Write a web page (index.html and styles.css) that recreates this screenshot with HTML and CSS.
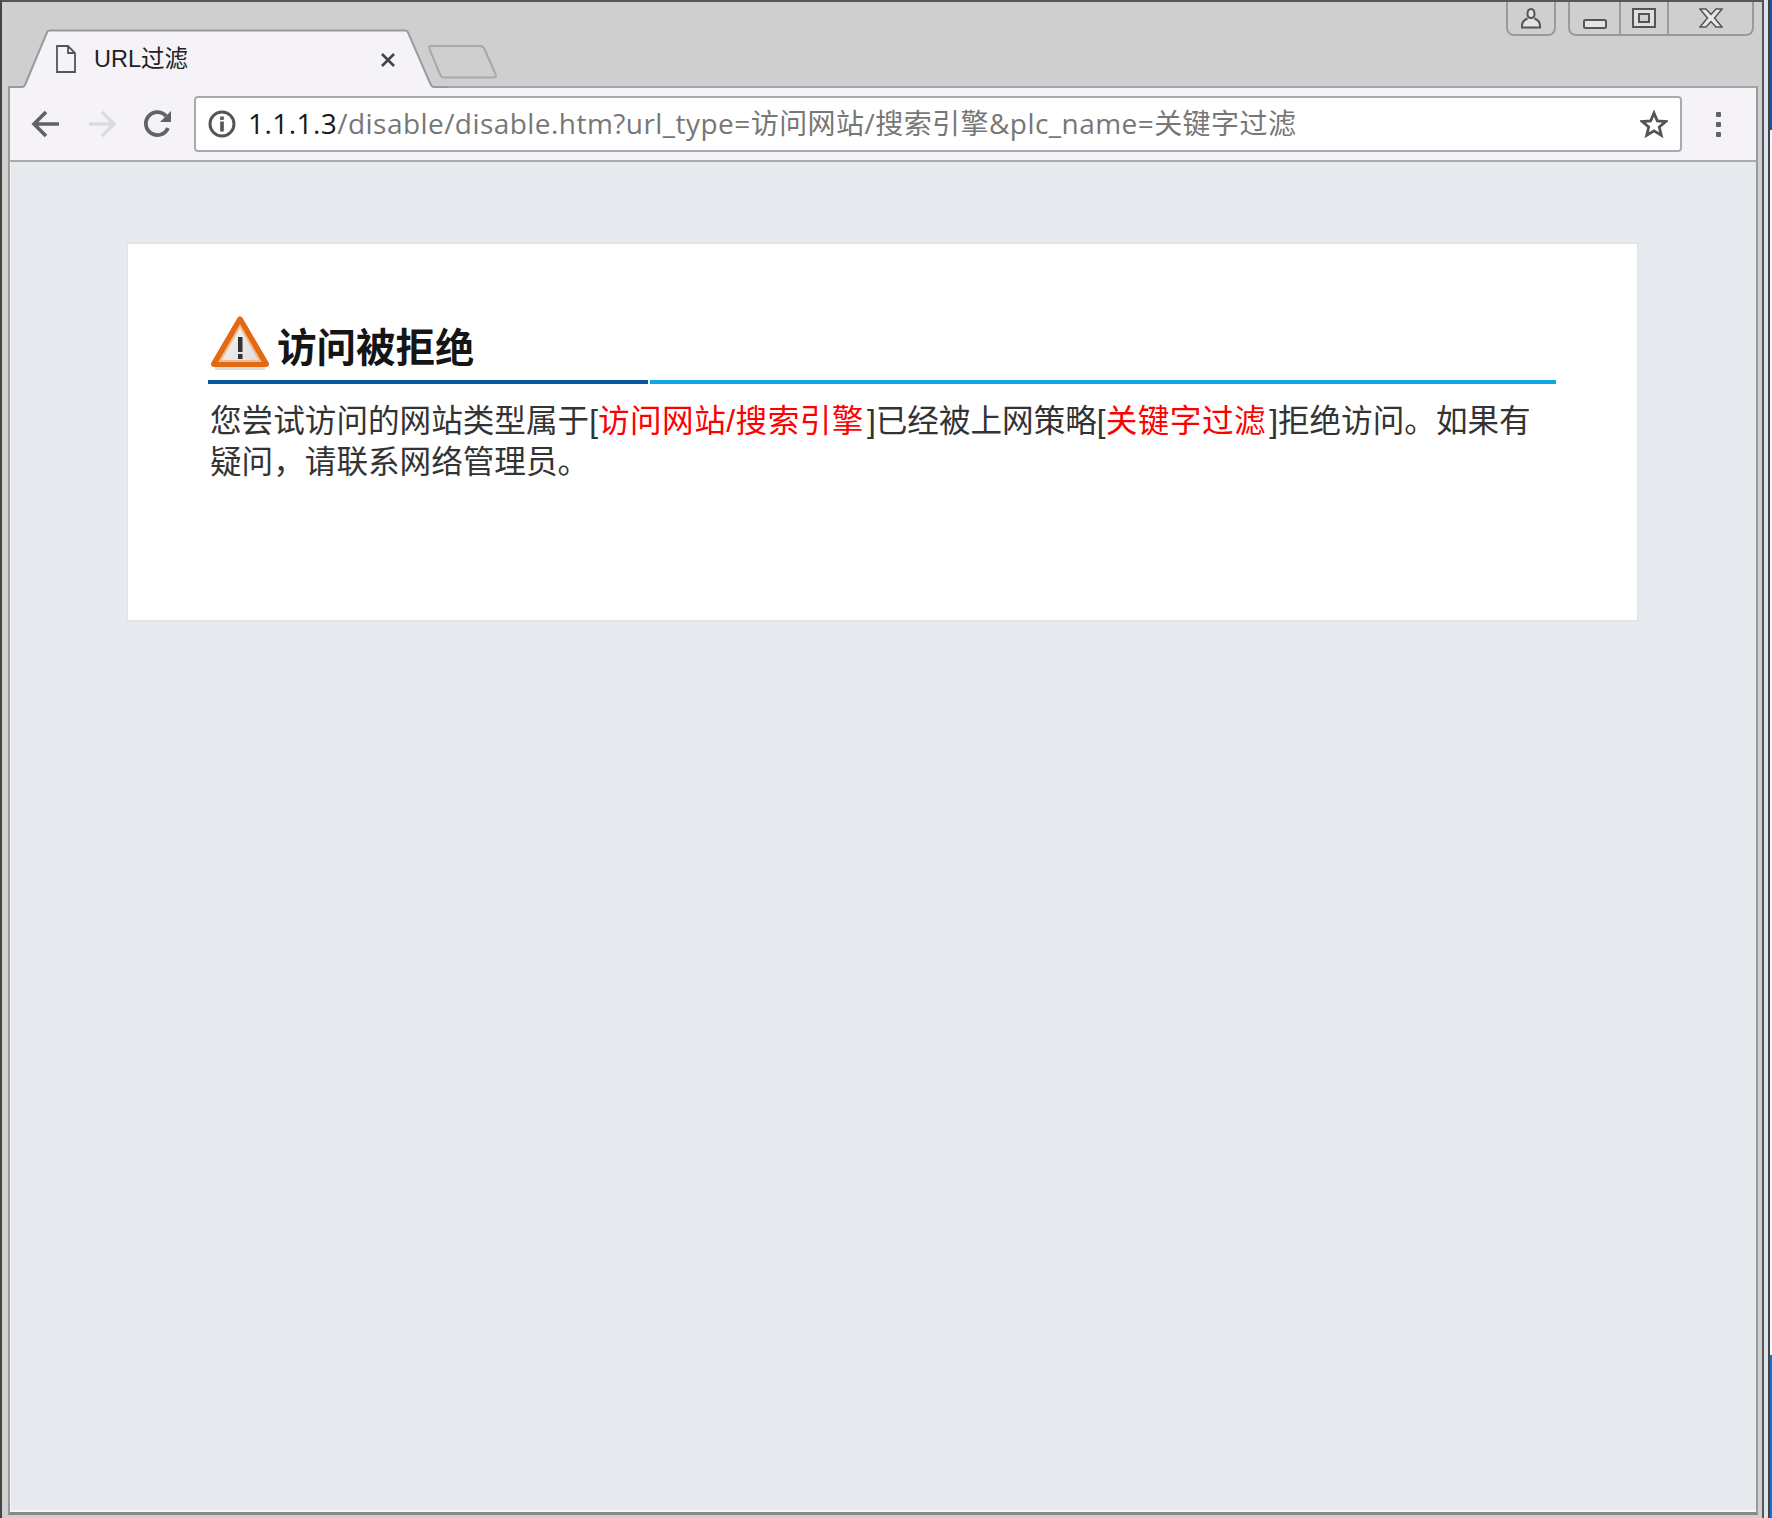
FILE: index.html
```html
<!DOCTYPE html>
<html lang="zh-CN">
<head>
<meta charset="utf-8">
<title>URL过滤</title>
<link rel="stylesheet" href="styles.css">
</head>
<body>
<div class="screen">
  <div class="window">
    <header class="titlebar">
      <div class="tab">
        <svg class="tab-shape" width="440" height="60" viewBox="0 0 440 60"><path d="M14 60V58C16 58 16.500 57 17 56L39 3.500C39.500 2 40.500 1.500 42 1.500H397C398.500 1.500 399.500 2 400 3.500L422 54C423 57 424 58 426 58V60Z" fill="#f6f3f8"/><path d="M0 58H14C16 58 16.500 57 17 56L39 3.500C39.500 2 40.500 1.500 42 1.500H397C398.500 1.500 399.500 2 400 3.500L422 54C423 57 424 58 426 58H440" fill="none" stroke="#9a9a9a" stroke-width="2"/></svg>
        <svg class="page-icon" width="20" height="28" viewBox="0 0 20 28"><path d="M1 1H12L19 8V27H1ZM12 1V8H19" fill="#f6f3f8" stroke="#555" stroke-width="1.800"/></svg>
        <span class="tab-title">URL过滤</span>
        <svg class="tab-close" width="16" height="16" viewBox="0 0 16 16"><path d="M2 2L14 14M14 2L2 14" stroke="#444" stroke-width="2.600"/></svg>
      </div>
      <svg class="newtab" width="70" height="36" viewBox="0 0 70 36"><path d="M2.500 2H52C54 2 55 2.500 56 4L67.500 30C68.500 32.500 67.500 33.500 65 33.500H16C14.500 33.500 13.500 33 12.500 31.500L1.500 5C1 3 1 2 2.500 2Z" fill="#cfcfcf" stroke="#a9a9a9" stroke-width="2"/></svg>
      <div class="controls">
        <div class="ctrl-group profile">
          <svg width="22" height="22" viewBox="0 0 22 22"><path d="M7.500 7C7.500 4 9 2 11 2S14.500 4 14.500 7 13 11 11 11 7.500 10 7.500 7ZM7.500 11.500C4 13 2 14.500 2 18.500V20.500H20V18.500C20 14.500 18 13 14.500 11.500" fill="#e4e4e4" stroke="#555" stroke-width="2"/></svg>
        </div>
        <div class="ctrl-group sys">
          <div class="sys-btn min"><svg width="24" height="10" viewBox="0 0 24 10"><rect x="1" y="1" width="22" height="8" rx="1.500" fill="#e4e4e4" stroke="#555" stroke-width="2"/></svg></div>
          <div class="sys-btn max"><svg width="24" height="20" viewBox="0 0 24 20"><rect x="1" y="1" width="22" height="18" fill="#e0e0e0" stroke="#555" stroke-width="2"/><rect x="7" y="6" width="10" height="8" fill="#cfcfcf" stroke="#555" stroke-width="2"/></svg></div>
          <div class="sys-btn close"><svg width="24" height="20" viewBox="0 0 24 20"><path d="M1 1H7L12 6.500L17 1H23L15.500 10L23 19H17L12 13.500L7 19H1L8.500 10Z" fill="#e8e8e8" stroke="#555" stroke-width="1.500"/></svg></div>
        </div>
      </div>
    </header>
    <nav class="toolbar">
      <button class="nav-btn" aria-label="back"><svg width="30" height="28" viewBox="0 0 30 28"><path d="M28 14H4M15 2L3 14L15 26" fill="none" stroke="#5f6368" stroke-width="3.600"/></svg></button>
      <button class="nav-btn" aria-label="forward"><svg width="30" height="28" viewBox="0 0 30 28"><path d="M2 14H26M15 2L27 14L15 26" fill="none" stroke="#dadce0" stroke-width="3.600"/></svg></button>
      <button class="nav-btn" aria-label="reload"><svg width="30" height="30" viewBox="0 0 30 30"><path d="M25 19A11.500 11.500 0 1 1 23 7" fill="none" stroke="#5f6368" stroke-width="3.800"/><path d="M28 2V13H17Z" fill="#5f6368"/></svg></button>
      <div class="omnibox">
        <svg class="info" width="28" height="28" viewBox="0 0 28 28"><circle cx="14" cy="14" r="12" fill="#fff" stroke="#555" stroke-width="3"/><rect x="12.200" y="6.500" width="3.600" height="3.400" fill="#555"/><rect x="12.200" y="11.500" width="3.600" height="10" fill="#555"/></svg>
        <div class="url"><span class="host">1.1.1.3</span>/disable/disable.htm?url_type=访问网站/搜索引擎&amp;plc_name=关键字过滤</div>
        <svg class="star" width="28" height="28" viewBox="0 0 28 28"><path d="M14 3L17.300 10.800L25.800 11.500L19.300 17L21.300 25.300L14 20.900L6.700 25.300L8.700 17L2.200 11.500L10.700 10.800Z" fill="#fff" stroke="#555" stroke-width="2.800"/></svg>
      </div>
      <div class="menu"><i></i><i></i><i></i></div>
    </nav>
    <main class="content">
      <section class="card">
        <h1 class="heading">
          <svg class="warn" width="60" height="58" viewBox="0 0 60 58">
            <defs><linearGradient id="warnfill" x1="0" y1="0" x2="1" y2="1"><stop offset="0" stop-color="#fafafa"/><stop offset="1" stop-color="#dcdcdc"/></linearGradient></defs>
            <path d="M5 52.500H55" stroke="#dddddd" stroke-width="3"/>
            <path d="M30 3.500L56 48H4Z" fill="url(#warnfill)" stroke="#e26a14" stroke-width="6" stroke-linejoin="round"/>
            <path d="M30 10L50 45H10Z" fill="none" stroke="#f2b98a" stroke-width="2"/>
            <rect x="28" y="21" width="4.500" height="15" fill="#333"/>
            <rect x="28" y="38" width="4.500" height="5" fill="#333"/>
          </svg>
          <span>访问被拒绝</span>
        </h1>
        <div class="rule"><i class="rule-dark"></i><i class="rule-light"></i></div>
        <p class="message">您尝试访问的网站类型属于[<em>访问网站/搜索引擎</em>]已经被上网策略[<em>关键字过滤</em>]拒绝访问。如果有疑问，请联系网络管理员。</p>
      </section>
    </main>
  </div>
  <div class="edge"></div>
</div>
</body>
</html>
```
FILE: styles.css
```css
* { box-sizing: border-box; }
html, body { margin: 0; padding: 0; }
body {
  width: 1772px;
  height: 1518px;
  overflow: hidden;
  background: #cfcfcf;
  font-family: "Liberation Sans", "Noto Sans CJK SC", sans-serif;
}
.screen { display: flex; width: 1772px; height: 1518px; }
.window {
  width: 1764px;
  height: 1518px;
  flex: none;
  display: flex;
  flex-direction: column;
  background: #cfcfcf;
  border-top: 2px solid #555;
  border-left: 2px solid #444;
  border-right: 2px solid #555;
  padding: 0 4px 3px 6px;
}
.edge {
  width: 8px;
  flex: none;
  background:
    linear-gradient(90deg, #dce4ec 0 4px, #444 4px 6px, transparent 6px),
    linear-gradient(180deg, #0f5aa5 0 130px, #f4f6f9 130px 1355px, #1272cc 1355px);
}
.titlebar {
  height: 84px;
  position: relative;
  z-index: 1;
  display: flex;
  flex: none;
  margin: 0 -4px 0 0;
}
.tab {
  width: 432px;
  height: 58px;
  margin-top: 27px;
  display: flex;
  align-items: center;
  position: relative;
  padding: 0 0 0 48px;
  flex: none;
}
.tab-shape { position: absolute; left: 0; top: 0; }
.page-icon, .tab-title, .tab-close { position: relative; }
.page-icon { flex: none; margin-top: 2px; }
.tab-title {
  margin-left: 18px;
  width: 286px;
  padding-bottom: 2px;
  font-size: 23.500px;
  color: #222;
}
.tab-close { flex: none; margin-top: 4px; }
.newtab { margin: 42px 0 0 -12px; flex: none; }
.controls {
  position: absolute;
  top: 0;
  right: 8px;
  display: flex;
  gap: 12px;
}
.ctrl-group {
  height: 34px;
  border: 2px solid #9a9a9a;
  border-top: 0;
  border-radius: 0 0 8px 8px;
  display: flex;
}
.profile { width: 50px; align-items: center; justify-content: center; }
.sys { width: 186px; }
.sys-btn { display: flex; align-items: center; justify-content: center; }
.min { width: 49px; padding-top: 12px; }
.max { width: 50px; border-left: 2px solid #9a9a9a; border-right: 2px solid #9a9a9a; }
.close { flex: 1; }
.toolbar {
  height: 76px;
  flex: none;
  background: #f6f3f8;
  border-top: 2px solid #a6a6a6;
  border-bottom: 2px solid #aaa;
  border-left: 2px solid #999;
  border-right: 2px solid #999;
  display: flex;
  align-items: center;
  padding: 0 0 0 8px;
}
.nav-btn {
  width: 56px;
  height: 40px;
  padding: 0;
  border: 0;
  background: none;
  display: flex;
  align-items: center;
  justify-content: center;
}
.omnibox {
  width: 1488px;
  height: 56px;
  margin-left: 8px;
  background: #fff;
  border: 2px solid #aaa;
  border-radius: 4px;
  display: flex;
  align-items: center;
  padding: 0 12px 0 12px;
}
.info { flex: none; }
.url {
  flex: 1;
  margin-left: 12px;
  padding-bottom: 3px;
  font-family: "Open Sans", "Noto Sans CJK SC", sans-serif;
  font-size: 28px;
  line-height: 40px;
  letter-spacing: 0.450px;
  color: #777;
  white-space: nowrap;
}
.host { color: #1a1a1a; }
.star { flex: none; }
.menu {
  margin-left: 34px;
  display: flex;
  flex-direction: column;
  gap: 5px;
}
.menu i { display: block; width: 5px; height: 5px; background: #5f6368; border-radius: 1px; }
.content {
  flex: 1;
  background: #e6e9ee;
  padding: 81px 118px 0 117px;
  border-left: 2px solid #999;
  border-right: 2px solid #999;
  border-bottom: 3px solid #888;
  box-shadow: inset 0 -2px 0 #f6f6f8, inset 1px 0 0 #f6f6f8;
}
.card {
  height: 378px;
  background: #fff;
  border: 1px solid #dfe2e7;
  padding: 71px 81px 0 80px;
}
.heading {
  margin: 0;
  height: 65px;
  display: flex;
  align-items: center;
  font-size: 39.500px;
  line-height: 58px;
  font-weight: 700;
  color: #151515;
  padding-left: 2px;
  gap: 7px;
}
.warn { flex: none; margin-top: -6px; }
.rule { display: flex; gap: 2px; height: 4px; }
.rule-dark { width: 440px; background: #0a57a4; }
.rule-light { flex: 1; background: #0ca7e4; }
.message {
  margin: 17px 0 0;
  padding: 0 14px 0 2px;
  font-size: 31.600px;
  line-height: 40.500px;
  color: #333;
}
.message em { font-style: normal; color: #f00; letter-spacing: 0.500px; margin-right: 3px; }
```
